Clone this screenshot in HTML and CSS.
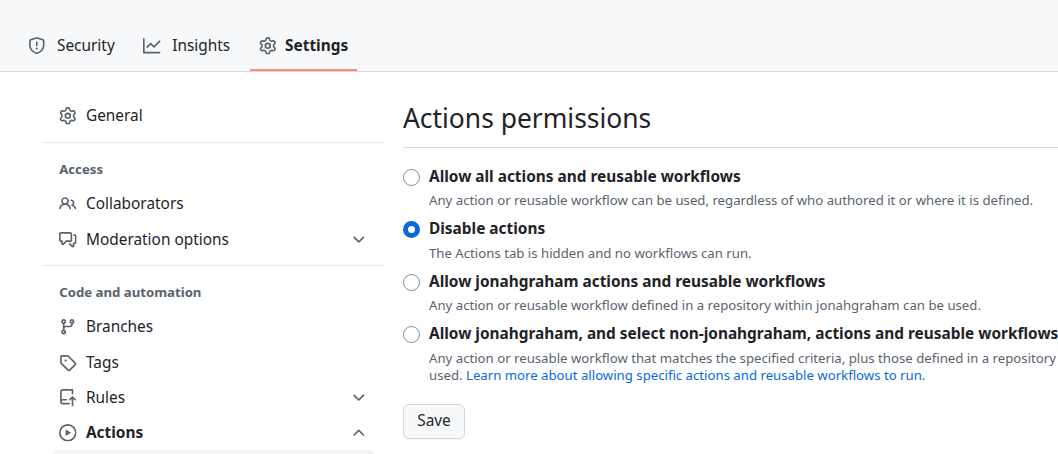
FILE: index.html
```html
<!DOCTYPE html>
<html lang="en">
<head>
<meta charset="utf-8">
<title>Actions permissions</title>
<link rel="stylesheet" href="styles.css">
</head>
<body>
<svg class="defs" width="0" height="0" aria-hidden="true">
  <symbol id="shield" viewBox="0 0 16 16"><path d="M8.533.133a1.75 1.75 0 0 0-1.066 0l-5.25 1.68A1.75 1.75 0 0 0 1 3.48V7c0 1.566.32 3.182 1.303 4.682.983 1.498 2.585 2.813 5.032 3.855a1.697 1.697 0 0 0 1.33 0c2.447-1.042 4.049-2.357 5.032-3.855C14.68 10.182 15 8.566 15 7V3.48a1.75 1.75 0 0 0-1.217-1.667Zm-.61 1.429.001.001a.25.25 0 0 1 .153 0l5.25 1.68a.25.25 0 0 1 .174.237V7c0 1.36-.275 2.666-1.057 3.859-.784 1.194-2.121 2.342-4.366 3.298a.196.196 0 0 1-.154 0c-2.245-.957-3.582-2.103-4.366-3.297C2.775 9.666 2.5 8.358 2.5 7V3.48a.25.25 0 0 1 .174-.238l5.25-1.68ZM9 10.5a1 1 0 1 1-2 0 1 1 0 0 1 2 0Zm-.25-5.75a.75.75 0 1 0-1.5 0v3a.75.75 0 0 0 1.5 0Z"/></symbol>
  <symbol id="graph" viewBox="0 0 16 16"><path d="M1.5 1.75V13.5h13.75a.75.75 0 0 1 0 1.5H.75a.75.75 0 0 1-.75-.75V1.75a.75.75 0 0 1 1.5 0Zm14.28 2.53-5.25 5.25a.75.75 0 0 1-1.06 0L7 7.06 4.28 9.78a.751.751 0 0 1-1.042-.018.751.751 0 0 1-.018-1.042l3.25-3.25a.75.75 0 0 1 1.06 0L10 7.94l4.72-4.72a.751.751 0 0 1 1.042.018.751.751 0 0 1 .018 1.042Z"/></symbol>
  <symbol id="gear" viewBox="0 0 16 16"><path d="M8 0a8.2 8.2 0 0 1 .701.031C9.444.095 9.99.645 10.16 1.29l.288 1.107c.018.066.079.158.212.224.231.114.454.243.668.386.123.082.233.09.299.071l1.103-.303c.644-.176 1.392.021 1.82.63.27.385.506.792.704 1.218.315.675.111 1.422-.364 1.891l-.814.806c-.049.048-.098.147-.088.294.016.257.016.515 0 .772-.01.147.038.246.088.294l.814.806c.475.469.679 1.216.364 1.891a7.977 7.977 0 0 1-.704 1.217c-.428.61-1.176.807-1.82.63l-1.102-.302c-.067-.019-.177-.011-.3.071a5.909 5.909 0 0 1-.668.386c-.133.066-.194.158-.211.224l-.29 1.106c-.168.646-.715 1.196-1.458 1.26a8.006 8.006 0 0 1-1.402 0c-.743-.064-1.289-.614-1.458-1.26l-.289-1.106c-.018-.066-.079-.158-.212-.224a5.738 5.738 0 0 1-.668-.386c-.123-.082-.233-.09-.299-.071l-1.103.303c-.644.176-1.392-.021-1.82-.63a8.12 8.12 0 0 1-.704-1.218c-.315-.675-.111-1.422.363-1.891l.815-.806c.05-.048.098-.147.088-.294a6.214 6.214 0 0 1 0-.772c.01-.147-.038-.246-.088-.294l-.815-.806C.635 6.045.431 5.298.746 4.623a7.92 7.92 0 0 1 .704-1.217c.428-.61 1.176-.807 1.82-.63l1.102.302c.067.019.177.011.3-.071.214-.143.437-.272.668-.386.133-.066.194-.158.211-.224l.29-1.106C6.009.645 6.556.095 7.299.03 7.53.01 7.764 0 8 0Zm-.571 1.525c-.036.003-.108.036-.137.146l-.289 1.105c-.147.561-.549.967-.998 1.189-.173.086-.34.183-.5.29-.417.278-.97.423-1.529.27l-1.103-.303c-.109-.03-.175.016-.195.045-.22.312-.412.644-.573.99-.014.031-.021.11.059.19l.815.806c.411.406.562.957.53 1.456a4.709 4.709 0 0 0 0 .582c.032.499-.119 1.05-.53 1.456l-.815.806c-.081.08-.073.159-.059.19.162.346.353.677.573.989.02.03.085.076.195.046l1.102-.303c.56-.153 1.113-.008 1.53.27.161.107.328.204.501.29.447.222.85.629.997 1.189l.289 1.105c.029.109.101.143.137.146a6.6 6.6 0 0 0 1.142 0c.036-.003.108-.036.137-.146l.289-1.105c.147-.561.549-.967.998-1.189.173-.086.34-.183.5-.29.417-.278.97-.423 1.529-.27l1.103.303c.109.029.175-.016.195-.045.22-.313.411-.644.573-.99.014-.031.021-.11-.059-.19l-.815-.806c-.411-.406-.562-.957-.53-1.456a4.709 4.709 0 0 0 0-.582c-.032-.499.119-1.05.53-1.456l.815-.806c.081-.08.073-.159.059-.19a6.464 6.464 0 0 0-.573-.989c-.02-.03-.085-.076-.195-.046l-1.102.303c-.56.153-1.113.008-1.53-.27a4.44 4.44 0 0 0-.501-.29c-.447-.222-.85-.629-.997-1.189l-.289-1.105c-.029-.11-.101-.143-.137-.146a6.6 6.6 0 0 0-1.142 0ZM11 8a3 3 0 1 1-6 0 3 3 0 0 1 6 0ZM9.5 8a1.5 1.5 0 1 0-3.001.001A1.5 1.5 0 0 0 9.5 8Z"/></symbol>
  <symbol id="people" viewBox="0 0 16 16"><path d="M2 5.5a3.5 3.5 0 1 1 5.898 2.549 5.508 5.508 0 0 1 3.034 4.084.75.75 0 1 1-1.482.235 4 4 0 0 0-7.9 0 .75.75 0 0 1-1.482-.236A5.507 5.507 0 0 1 3.102 8.05 3.493 3.493 0 0 1 2 5.5ZM11 4a3.001 3.001 0 0 1 2.22 5.018 5.01 5.01 0 0 1 2.56 3.012.749.749 0 0 1-.885.954.752.752 0 0 1-.549-.514 3.507 3.507 0 0 0-2.522-2.372.75.75 0 0 1-.574-.73v-.352a.75.75 0 0 1 .416-.672A1.5 1.5 0 0 0 11 5.5.75.75 0 0 1 11 4Zm-5.5-.5a2 2 0 1 0-.001 3.999A2 2 0 0 0 5.5 3.5Z"/></symbol>
  <symbol id="discussion" viewBox="0 0 16 16"><path d="M1.75 1h8.5c.966 0 1.75.784 1.75 1.75v5.5A1.75 1.75 0 0 1 10.25 10H7.061l-2.574 2.573A1.458 1.458 0 0 1 2 11.543V10h-.25A1.75 1.75 0 0 1 0 8.25v-5.5C0 1.784.784 1 1.75 1ZM1.5 2.75v5.5c0 .138.112.25.25.25h1a.75.75 0 0 1 .75.75v2.19l2.72-2.72a.749.749 0 0 1 .53-.22h3.5a.25.25 0 0 0 .25-.25v-5.5a.25.25 0 0 0-.25-.25h-8.5a.25.25 0 0 0-.25.25Zm13 2a.25.25 0 0 0-.25-.25h-.5a.75.75 0 0 1 0-1.5h.5c.966 0 1.75.784 1.75 1.75v5.5A1.75 1.75 0 0 1 14.25 12H14v1.543a1.458 1.458 0 0 1-2.487 1.03L9.22 12.28a.749.749 0 0 1 .326-1.275.749.749 0 0 1 .734.215l2.22 2.22v-2.19a.75.75 0 0 1 .75-.75h1a.25.25 0 0 0 .25-.25Z"/></symbol>
  <symbol id="branch" viewBox="0 0 16 16"><path d="M9.5 3.25a2.25 2.25 0 1 1 3 2.122V6A2.5 2.5 0 0 1 10 8.5H6a1 1 0 0 0-1 1v1.128a2.251 2.251 0 1 1-1.5 0V5.372a2.25 2.25 0 1 1 1.5 0v1.836A2.493 2.493 0 0 1 6 7h4a1 1 0 0 0 1-1v-.628A2.25 2.25 0 0 1 9.5 3.25Zm-6 0a.75.75 0 1 0 1.5 0 .75.75 0 0 0-1.5 0Zm8.25-.75a.75.75 0 1 0 0 1.5.75.75 0 0 0 0-1.5ZM4.25 12a.75.75 0 1 0 0 1.5.75.75 0 0 0 0-1.5Z"/></symbol>
  <symbol id="tag" viewBox="0 0 16 16"><path d="M1 7.775V2.75C1 1.784 1.784 1 2.75 1h5.025c.464 0 .91.184 1.238.513l6.25 6.25a1.75 1.75 0 0 1 0 2.474l-5.026 5.026a1.75 1.75 0 0 1-2.474 0l-6.25-6.25A1.752 1.752 0 0 1 1 7.775Zm1.5 0c0 .066.026.13.073.177l6.25 6.25a.25.25 0 0 0 .354 0l5.025-5.025a.25.25 0 0 0 0-.354l-6.25-6.25a.25.25 0 0 0-.177-.073H2.75a.25.25 0 0 0-.25.25ZM6 5a1 1 0 1 1 0 2 1 1 0 0 1 0-2Z"/></symbol>
  <symbol id="repo-push" viewBox="0 0 16 16"><path d="M1 2.5A2.5 2.5 0 0 1 3.5 0h8.75a.75.75 0 0 1 .75.75v3.5a.75.75 0 0 1-1.5 0V1.5h-8a1 1 0 0 0-1 1v6.708A2.493 2.493 0 0 1 3.5 9h3.25a.75.75 0 0 1 0 1.5H3.5a1 1 0 0 0 0 2h5.75a.75.75 0 0 1 0 1.5H3.5A2.5 2.5 0 0 1 1 11.5Zm13.23 7.79h-.001l-1.224-1.224v6.184a.75.75 0 0 1-1.5 0V9.066L10.28 10.29a.75.75 0 0 1-1.06-1.061l2.505-2.504a.75.75 0 0 1 1.06 0L15.29 9.23a.751.751 0 0 1-.018 1.042.751.751 0 0 1-1.042.018Z"/></symbol>
  <symbol id="play" viewBox="0 0 16 16"><path d="M8 0a8 8 0 1 1 0 16A8 8 0 0 1 8 0ZM1.5 8a6.5 6.5 0 1 0 13 0 6.5 6.5 0 0 0-13 0Zm4.879-2.773 4.264 2.559a.25.25 0 0 1 0 .428l-4.264 2.559A.25.25 0 0 1 6 10.559V5.442a.25.25 0 0 1 .379-.215Z"/></symbol>
  <symbol id="chev-down" viewBox="0 0 16 16"><path d="M12.78 5.22a.749.749 0 0 1 0 1.06l-4.25 4.25a.749.749 0 0 1-1.06 0L3.22 6.28a.749.749 0 1 1 1.06-1.06L8 8.939l3.72-3.719a.749.749 0 0 1 1.06 0Z"/></symbol>
  <symbol id="chev-up" viewBox="0 0 16 16"><path d="M3.22 10.53a.749.749 0 0 1 0-1.06l4.25-4.25a.749.749 0 0 1 1.06 0l4.25 4.25a.749.749 0 1 1-1.06 1.06L8 6.811 4.28 10.53a.749.749 0 0 1-1.06 0Z"/></symbol>
</svg>

<header class="repo-header">
  <nav class="tabs">
    <a class="tab"><svg class="icon icon-wide"><use href="#shield"/></svg><span>Security</span></a>
    <a class="tab"><svg class="icon icon-wide"><use href="#graph"/></svg><span>Insights</span></a>
    <a class="tab tab-current"><svg class="icon"><use href="#gear"/></svg><span>Settings</span></a>
  </nav>
</header>

<div class="page">
  <aside class="sidebar">
    <section class="side-group side-first">
      <a class="side-item"><svg class="icon"><use href="#gear"/></svg><span class="side-label">General</span></a>
    </section>
    <section class="side-group side-access">
      <h2 class="side-heading">Access</h2>
      <a class="side-item"><svg class="icon"><use href="#people"/></svg><span class="side-label">Collaborators</span></a>
      <a class="side-item"><svg class="icon"><use href="#discussion"/></svg><span class="side-label">Moderation options</span><svg class="icon"><use href="#chev-down"/></svg></a>
    </section>
    <section class="side-group side-last">
      <h2 class="side-heading">Code and automation</h2>
      <a class="side-item"><svg class="icon"><use href="#branch"/></svg><span class="side-label">Branches</span></a>
      <a class="side-item"><svg class="icon"><use href="#tag"/></svg><span class="side-label">Tags</span></a>
      <a class="side-item"><svg class="icon"><use href="#repo-push"/></svg><span class="side-label">Rules</span><svg class="icon"><use href="#chev-down"/></svg></a>
      <a class="side-item side-current"><svg class="icon"><use href="#play"/></svg><span class="side-label">Actions</span><svg class="icon"><use href="#chev-up"/></svg></a>
      <div class="subnav"></div>
    </section>
  </aside>

  <main class="content">
    <h1 class="title">Actions permissions</h1>
    <form class="options">
      <div class="option">
        <span class="radio"></span>
        <div>
          <div class="option-label">Allow all actions and reusable workflows</div>
          <p class="option-note">Any action or reusable workflow can be used, regardless of who authored it or where it is defined.</p>
        </div>
      </div>
      <div class="option">
        <span class="radio radio-on"></span>
        <div>
          <div class="option-label">Disable actions</div>
          <p class="option-note">The Actions tab is hidden and no workflows can run.</p>
        </div>
      </div>
      <div class="option">
        <span class="radio"></span>
        <div>
          <div class="option-label">Allow jonahgraham actions and reusable workflows</div>
          <p class="option-note">Any action or reusable workflow defined in a repository within jonahgraham can be used.</p>
        </div>
      </div>
      <div class="option">
        <span class="radio"></span>
        <div>
          <div class="option-label">Allow jonahgraham, and select non-jonahgraham, actions and reusable workflows</div>
          <p class="option-note">Any action or reusable workflow that matches the specified criteria, plus those defined in a repository within jonahgraham can be used. <a class="link">Learn more about allowing specific actions and reusable workflows to run.</a></p>
        </div>
      </div>
      <button class="save" type="button">Save</button>
    </form>
  </main>
</div>
</body>
</html>
```

FILE: styles.css
```css
* { box-sizing: border-box; }
html, body { margin: 0; height: 454px; overflow: hidden; }
body {
  font-family: "Noto Sans", sans-serif;
  font-size: 15.4px;
  color: #1f2328;
  background: #fff;
}
.defs { position: absolute; }
.icon { width: 17.6px; height: 17.6px; flex: none; fill: #59636e; }

.repo-header {
  height: 72px;
  background: #f6f8fa;
  border-bottom: 1px solid #d1d9e0;
  padding: 31px 0 0 19.2px;
}
.tabs { display: flex; gap: 10.9px; height: 40px; }
.tab {
  display: flex;
  align-items: center;
  height: 40px;
  padding: 0 8.8px 8px;
  line-height: 30px;
  color: #1f2328;
  border-bottom: 2px solid transparent;
}
.tab .icon { margin-right: 8.8px; }
.tab .icon-wide { margin-right: 11.4px; }
.tab-current { font-weight: 700; border-bottom-color: #fd8c73; }

.page { display: flex; width: 1400px; padding: 0 0 0 42px; }
.sidebar { width: 343px; flex: none; }
.side-group { padding: 17px 0 8px; border-bottom: 1px solid #e8ebef; }
.side-first { padding: 26px 0 8px; }
.side-access { padding: 16px 0 7px; }
.side-last { border-bottom: 0; padding-top: 16px; }
.side-heading {
  margin: 0 0 8px;
  padding-left: 17.2px;
  font-size: 13.2px;
  line-height: 20px;
  font-weight: 700;
  color: #59636e;
}
.side-item {
  display: flex;
  align-items: center;
  height: 35.5px;
  gap: 9.2px;
  padding: 0 17px 0 17.2px;
  width: 343px;
  color: #1f2328;
  line-height: 20px;
}
.side-label { flex: 1; }
.side-current { font-weight: 700; margin-top: -.5px; }
.subnav {
  height: 20px;
  width: 323px;
  margin: -1px 0 0 10px;
  background: #f4f5f7;
  border-radius: 6px 6px 0 0;
}

.content { width: 840px; margin-left: 18px; flex: none; }
.title {
  margin: 0;
  padding: 27px 0 9px;
  font-size: 26.4px;
  line-height: 39px;
  font-weight: 400;
  color: #1f2328;
  border-bottom: 1px solid #d1d9e0;
  width: 700px;
}
.options { padding-top: 17px; }
.option { display: flex; gap: 9px; margin-bottom: 8.1px; }
.radio {
  width: 17px;
  height: 17px;
  flex: none;
  margin-top: 4px;
  border: 1px solid #818b98;
  border-radius: 50%;
  background: #fff;
}
.radio-on { border: 5px solid #0969da; }
.option-label { font-weight: 700; line-height: 24px; white-space: nowrap; }
.option-note {
  margin: 3.4px 0 0;
  font-size: 13.2px;
  line-height: 17px;
  color: #59636e;
}
.link { color: #0969da; }
.save {
  display: block;
  margin-top: 20px;
  width: 62px;
  height: 35px;
  padding: 0;
  font: 400 15.4px/20px "Noto Sans", sans-serif;
  color: #25292e;
  background: #f6f8fa;
  border: 1px solid #d1d9e0;
  border-radius: 6px;
  box-shadow: 0 1px 0 rgba(31, 35, 40, .04);
}
```
